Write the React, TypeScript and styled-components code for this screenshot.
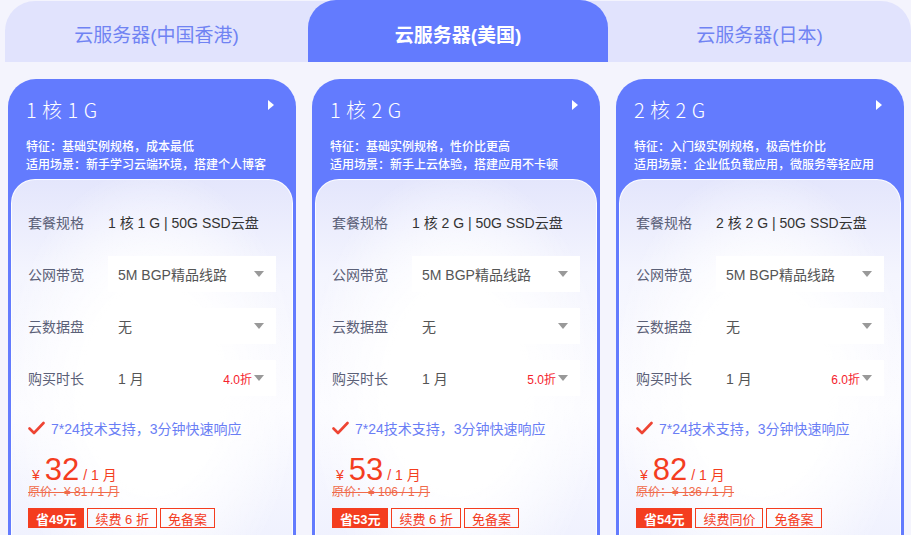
import React from 'react';
import styled, { createGlobalStyle } from 'styled-components';

const GlobalStyle = createGlobalStyle`
	html, body {
		margin: 0;
		padding: 0;
		background: #f4f4fd;
		overflow: hidden;
	}
	body {
		font-family: "Liberation Sans", "Noto Sans CJK SC", sans-serif;
	}
`;

const BLUE = '#637bfe';
const RED = '#f43d1f';

const Page = styled.div`
	width: 911px;
	height: 535px;
	overflow: hidden;
`;

const TabBar = styled.div`
	display: grid;
	grid-template-columns: 303px 300px 303px;
	margin: 1px 0 0 5px;
	height: 61px;
	background: #e1e3fd;
	border-radius: 30px 30px 0 0;
`;

const Tab = styled.div<{ $active?: boolean }>`
	display: flex;
	align-items: center;
	justify-content: center;
	padding-top: 4px;
	font-size: 19px;
	font-weight: ${(p) => (p.$active ? 700 : 400)};
	color: ${(p) => (p.$active ? '#fff' : '#7083f3')};
	background: ${(p) => (p.$active ? BLUE : 'transparent')};
	border-radius: 28px 28px 0 0;
	margin-top: ${(p) => (p.$active ? '-1px' : '0')};
`;

const CardRow = styled.div`
	display: flex;
	gap: 16px;
	padding: 17px 0 0 8px;
`;

const Card = styled.div`
	flex: 0 0 288px;
	height: 480px;
	background: ${BLUE};
	border-radius: 28px 28px 0 0;
	display: flex;
	flex-direction: column;
`;

const Header = styled.div`
	height: 100px;
	box-sizing: border-box;
	padding: 18px 18px 0 18px;
	color: #fff;
`;

const TitleLine = styled.div`
	display: flex;
	justify-content: space-between;
	align-items: flex-start;
`;

const Title = styled.div`
	font-size: 20px;
	line-height: 26px;
	letter-spacing: 0.5px;
	font-weight: 300;
	font-family: "Noto Sans CJK SC", "Liberation Sans", sans-serif;
`;

const Arrow = styled.span`
	width: 0;
	height: 0;
	margin: 3px 4px 0 0;
	border-top: 5px solid transparent;
	border-bottom: 5px solid transparent;
	border-left: 6px solid #fff;
`;

const Feature = styled.div`
	margin-top: 14px;
	font-size: 12px;
	line-height: 18px;
	font-weight: 500;
	font-family: "Noto Sans CJK SC", sans-serif;
	white-space: nowrap;
`;

const Panel = styled.div`
	flex: 1;
	margin: 0 3px;
	border-radius: 24px 24px 0 0;
	border: 1.5px solid rgba(255, 255, 255, 0.9);
	border-bottom: none;
	background:
		radial-gradient(ellipse at 50% 55%, #ffffff 35%, rgba(255, 255, 255, 0) 75%),
		linear-gradient(180deg, #e4e6fc 0%, #f4f5fe 25%, #fbfbff 60%, #eef0fe 100%);
	padding: 24px 16px 0 16px;
	box-sizing: border-box;
	display: flex;
	flex-direction: column;
`;

const Row = styled.div`
	display: flex;
	align-items: center;
	height: 36px;
	margin-bottom: 16px;
`;

const Label = styled.div`
	width: 80px;
	font-size: 14px;
	color: #5b6077;
	font-family: "Noto Sans CJK SC", sans-serif;
`;

const Value = styled.div`
	font-size: 14px;
	color: #333;
`;

const Select = styled.div`
	width: 168px;
	height: 36px;
	box-sizing: border-box;
	background: #fff;
	display: flex;
	align-items: center;
	padding: 0 12px 0 10px;
	font-size: 14px;
	color: #555;
`;

const SelectText = styled.span`
	flex: 1;
`;

const Discount = styled.span`
	font-size: 12px;
	color: #f5222d;
	margin-right: 2px;
`;

const Caret = styled.span`
	width: 0;
	height: 0;
	border-left: 5px solid transparent;
	border-right: 5px solid transparent;
	border-top: 6px solid #999;
`;

const Support = styled.div`
	display: flex;
	align-items: center;
	gap: 6px;
	margin-top: 6px;
	font-size: 14px;
	color: #6a7ef5;
`;

const PriceLine = styled.div`
	display: flex;
	align-items: baseline;
	margin-top: 14px;
	padding-left: 4px;
	color: ${RED};
	height: 34px;
`;

const Yen = styled.span`
	font-size: 14px;
	margin-right: 5px;
`;

const Amount = styled.span`
	font-size: 31px;
	margin-right: 4px;
`;

const Per = styled.span`
	font-size: 14px;
`;

const Original = styled.div`
	font-size: 12px;
	color: #f06a4a;
	text-decoration: line-through;
	line-height: 16px;
	margin-top: -2px;
`;

const Tags = styled.div`
	display: flex;
	gap: 3px;
	margin-top: 8px;
`;

const Tag = styled.span<{ $solid?: boolean }>`
	height: 20px;
	box-sizing: border-box;
	display: flex;
	align-items: center;
	padding: 0 7px;
	font-size: 13px;
	border: 1px solid ${RED};
	background: ${(p) => (p.$solid ? RED : 'transparent')};
	color: ${(p) => (p.$solid ? '#fff' : RED)};
	font-weight: ${(p) => (p.$solid ? 700 : 400)};
`;

const Check = () => (
	<svg width="17" height="14" viewBox="0 0 17 14">
		<path d="M1.5 7.5 L6 12 L15.5 2" fill="none" stroke="#ee4433" strokeWidth="2.6" strokeLinecap="round" strokeLinejoin="round" />
	</svg>
);

type Plan = {
	title: string;
	feature: string;
	scene: string;
	spec: string;
	discount: string;
	price: string;
	original: string;
	save: string;
	renew: string;
};

const plans: Plan[] = [
	{
		title: '1 核 1 G',
		feature: '特征：基础实例规格，成本最低',
		scene: '适用场景：新手学习云端环境，搭建个人博客',
		spec: '1 核 1 G | 50G SSD云盘',
		discount: '4.0折',
		price: '32',
		original: '81',
		save: '省49元',
		renew: '续费 6 折',
	},
	{
		title: '1 核 2 G',
		feature: '特征：基础实例规格，性价比更高',
		scene: '适用场景：新手上云体验，搭建应用不卡顿',
		spec: '1 核 2 G | 50G SSD云盘',
		discount: '5.0折',
		price: '53',
		original: '106',
		save: '省53元',
		renew: '续费 6 折',
	},
	{
		title: '2 核 2 G',
		feature: '特征：入门级实例规格，极高性价比',
		scene: '适用场景：企业低负载应用，微服务等轻应用',
		spec: '2 核 2 G | 50G SSD云盘',
		discount: '6.0折',
		price: '82',
		original: '136',
		save: '省54元',
		renew: '续费同价',
	},
];

const PlanCard = ({ plan }: { plan: Plan }) => (
	<Card>
		<Header>
			<TitleLine>
				<Title>{plan.title}</Title>
				<Arrow />
			</TitleLine>
			<Feature>
				{plan.feature}
				<br />
				{plan.scene}
			</Feature>
		</Header>
		<Panel>
			<Row>
				<Label>套餐规格</Label>
				<Value>{plan.spec}</Value>
			</Row>
			<Row>
				<Label>公网带宽</Label>
				<Select>
					<SelectText>5M BGP精品线路</SelectText>
					<Caret />
				</Select>
			</Row>
			<Row>
				<Label>云数据盘</Label>
				<Select>
					<SelectText>无</SelectText>
					<Caret />
				</Select>
			</Row>
			<Row>
				<Label>购买时长</Label>
				<Select>
					<SelectText>1 月</SelectText>
					<Discount>{plan.discount}</Discount>
					<Caret />
				</Select>
			</Row>
			<Support>
				<Check />
				7*24技术支持，3分钟快速响应
			</Support>
			<PriceLine>
				<Yen>¥</Yen>
				<Amount>{plan.price}</Amount>
				<Per>/ 1 月</Per>
			</PriceLine>
			<Original>原价：¥ {plan.original} / 1 月</Original>
			<Tags>
				<Tag $solid>{plan.save}</Tag>
				<Tag>{plan.renew}</Tag>
				<Tag>免备案</Tag>
			</Tags>
		</Panel>
	</Card>
);

const App = () => {
	return (
		<Page>
			<GlobalStyle />
			<TabBar>
				<Tab>云服务器(中国香港)</Tab>
				<Tab $active>云服务器(美国)</Tab>
				<Tab>云服务器(日本)</Tab>
			</TabBar>
			<CardRow>
				{plans.map((p) => (
					<PlanCard key={p.title} plan={p} />
				))}
			</CardRow>
		</Page>
	);
};

export default App;
